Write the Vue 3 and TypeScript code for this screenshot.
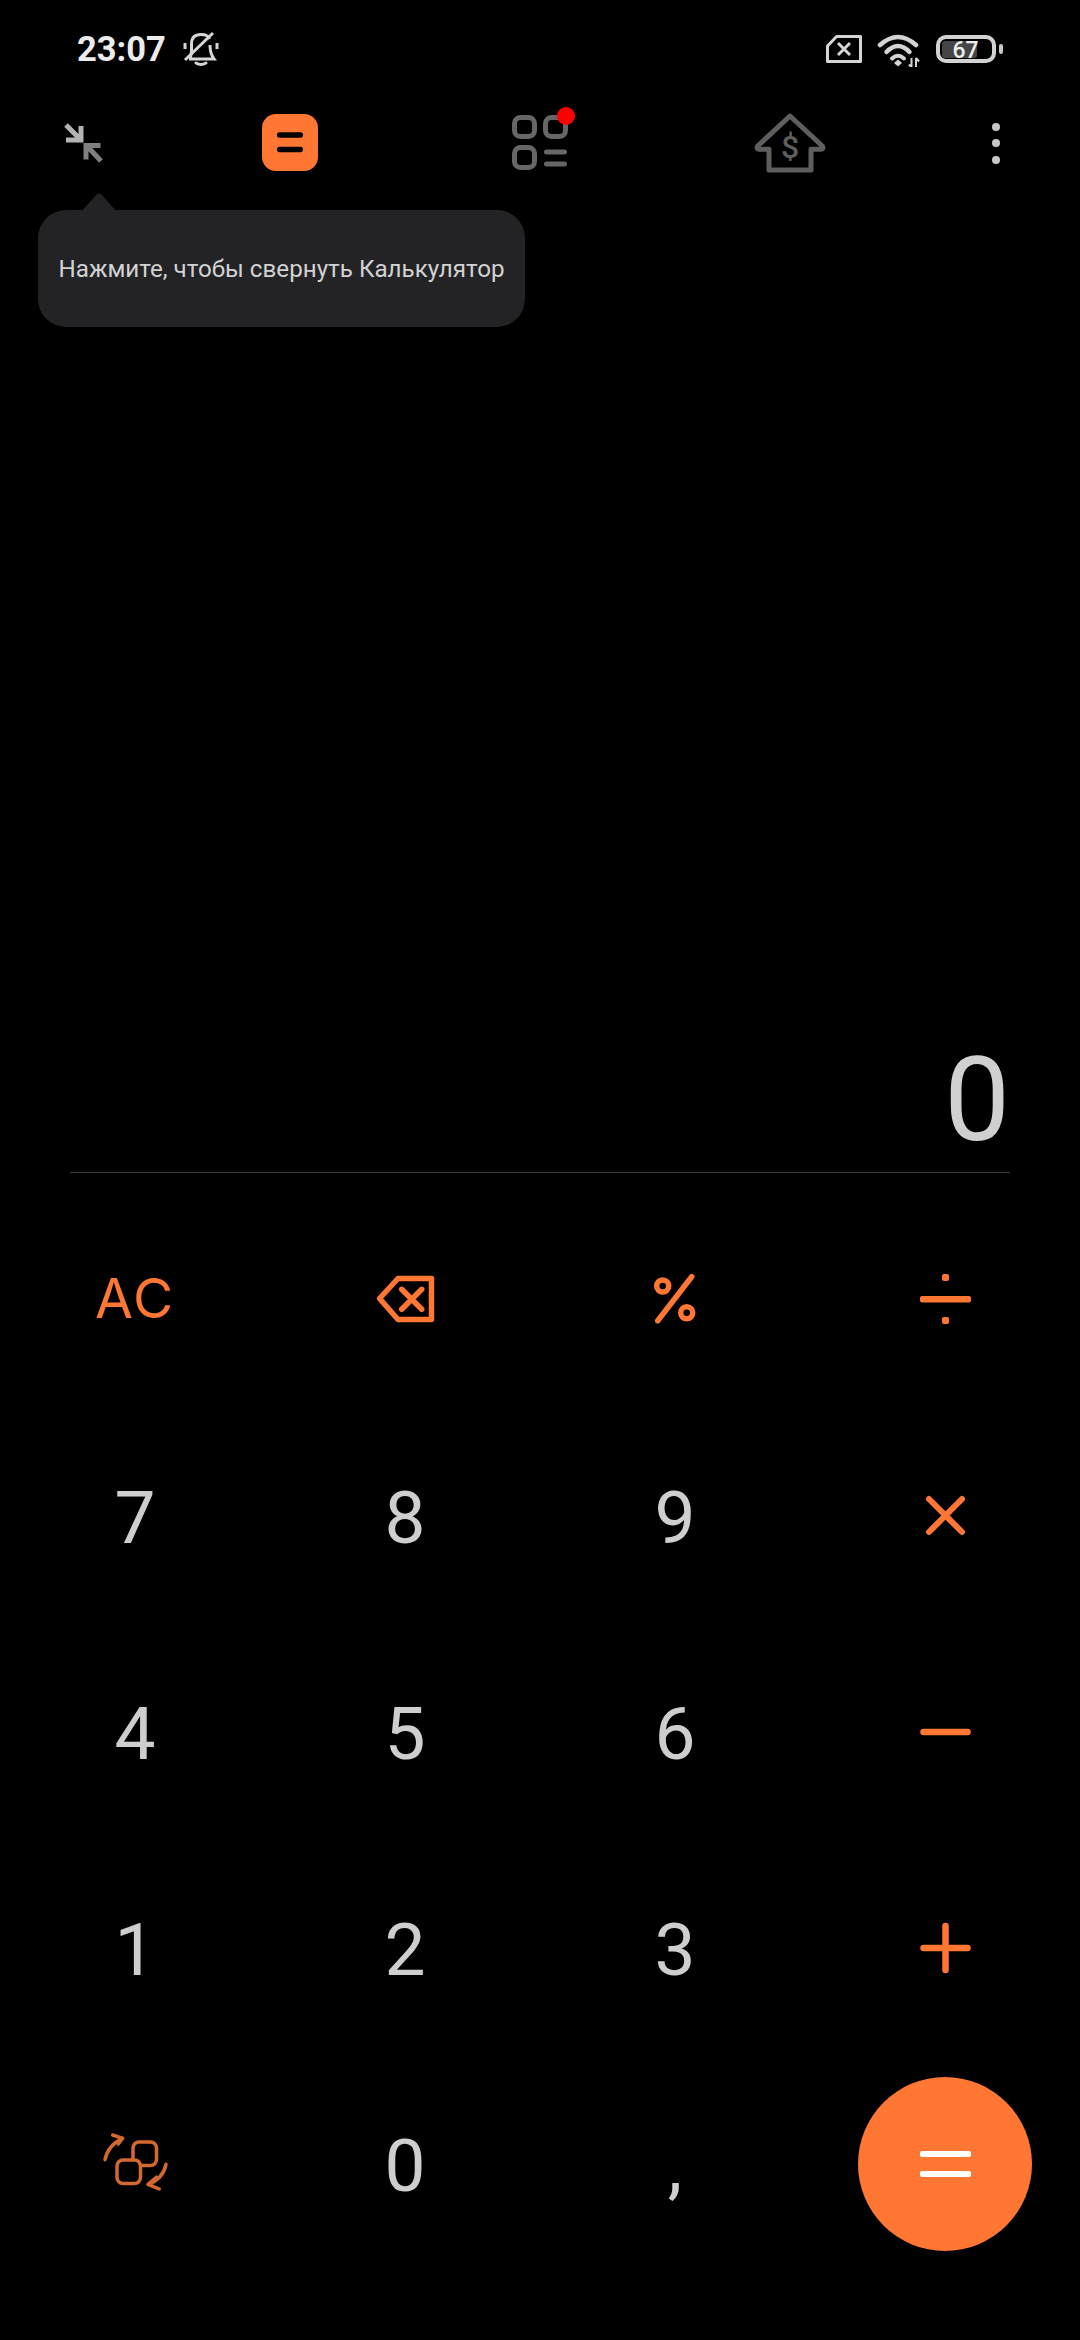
<script setup lang="ts">
type Key = { label?: string; icon?: string; kind: "num" | "fn" | "op" | "eq" };

const keys: Key[] = [
  { label: "AC", kind: "fn" },
  { icon: "back", kind: "fn" },
  { icon: "percent", kind: "fn" },
  { icon: "divide", kind: "fn" },
  { label: "7", kind: "num" },
  { label: "8", kind: "num" },
  { label: "9", kind: "num" },
  { icon: "times", kind: "op" },
  { label: "4", kind: "num" },
  { label: "5", kind: "num" },
  { label: "6", kind: "num" },
  { icon: "minus", kind: "op" },
  { label: "1", kind: "num" },
  { label: "2", kind: "num" },
  { label: "3", kind: "num" },
  { icon: "plus", kind: "op" },
  { icon: "swap", kind: "fn" },
  { label: "0", kind: "num" },
  { label: ",", kind: "num" },
  { kind: "eq" },
];
</script>

<template>
  <div class="page">
    <header class="status">
      <div class="status-left">
        <span class="time">23:07</span>
        <svg class="bell" width="60" height="50" viewBox="0 -1 60 50" fill="none" stroke="#d6d6d6">
          <path d="M19 33C21 29 20.5 24 20.5 19C20.5 12 24 9.5 30 9.5C35 9.5 37.5 11 38.5 14M39 20C39 26 40 30 43 34H18" stroke-width="3" />
          <path d="M25 38Q30 41 35 38" stroke-width="3" stroke-linecap="round" />
          <path d="M14 18V24M46 18V24" stroke-width="3" />
          <path d="M14 35L42 8" stroke-width="3" />
        </svg>
      </div>
      <div class="status-right">
        <svg width="40" height="36" viewBox="0 -1 40 36" fill="none" stroke="#d4d4d4" stroke-linejoin="round">
          <path d="M12.5 4.5H36.5V29.5H3.5V14Z" stroke-width="3" />
          <path d="M14 11L26 23M26 11L14 23" stroke-width="3" />
        </svg>
        <svg class="wifi" width="46" height="36" viewBox="0 -1 46 36" fill="none" stroke="#d4d4d4">
          <path d="M5 13Q23 -3 41 13" stroke-width="4.5" stroke-linecap="round" />
          <path d="M11.5 20Q23 8 34.5 20" stroke-width="4.5" stroke-linecap="round" />
          <path d="M17 26.5Q23 21 29 26.5" stroke-width="4" stroke-linecap="round" />
          <path d="M23 27.5L27 31L23 34.5L19 31Z" fill="#d4d4d4" stroke="none" />
          <path d="M36.5 26V35M34 32.5L36.5 35.5M41 35V26M41 26L44 29.5" stroke-width="2" />
        </svg>
        <svg class="battery" width="72" height="36" viewBox="0 -1 72 36">
          <rect x="4" y="5" width="56" height="24" rx="8" fill="none" stroke="#d2d2d2" stroke-width="4" />
          <rect x="8" y="9" width="35" height="17" rx="3" fill="#454545" />
          <rect x="65" y="12" width="4" height="10" rx="2" fill="#c8c8c8" />
          <text x="31.5" y="26" text-anchor="middle" class="battery-text">67</text>
        </svg>
      </div>
    </header>

    <nav class="toolbar">
      <svg width="60" height="60" viewBox="0 0 60 60" fill="none" stroke-width="5">
        <path d="M13 12L27 26M28 13V27H13" stroke="#b4b4b4" />
        <path d="M48 48L34 33M47.5 32.5H33V46.5" stroke="#808080" />
      </svg>
      <div class="toolbar-center">
        <svg width="60" height="60" viewBox="0 0 60 60">
          <rect x="2" y="1" width="56" height="57" rx="14" fill="#ff7733" />
          <path d="M19.7 22H40.3M19.7 36.5H40.3" stroke="#000" stroke-width="5.5" stroke-linecap="round" />
        </svg>
        <div class="tool-grid">
          <svg width="60" height="60" viewBox="0 0 60 60" fill="none" stroke="#666" stroke-width="5" stroke-linecap="round">
            <rect x="4.5" y="4.5" width="20" height="19" rx="6" />
            <rect x="35.5" y="4.5" width="20" height="19" rx="6" />
            <rect x="4.5" y="34.5" width="20" height="20" rx="6" />
            <path d="M36.5 39H54.5M36.5 51H54.5" />
          </svg>
          <span class="badge"></span>
        </div>
        <svg class="house" width="60" height="60" viewBox="15 0 60 60" fill="none" stroke="#5e5e5e" stroke-width="5" stroke-linejoin="round">
          <path d="M45 3L12.7 33Q11 36 14 36.3H24V57H66V36.3H76Q79 36 77.3 33Z" />
          <text x="45" y="44.5" text-anchor="middle" class="dollar">$</text>
        </svg>
      </div>
      <div class="more">
        <span></span>
        <span></span>
        <span></span>
      </div>
    </nav>

    <div class="hint">
      <svg class="hint-arrow" width="40" height="20" viewBox="0 0 40 20">
        <path d="M2 20L17 3Q20 0 23 3L38 20Z" fill="#232325" />
      </svg>
      <span>Нажмите, чтобы свернуть Калькулятор</span>
    </div>

    <section class="display">0</section>
    <div class="divider"></div>

    <section class="keypad">
      <div v-for="(key, i) in keys" :key="i" class="key" :class="key.kind">
        <template v-if="key.label">{{ key.label }}</template>

        <svg v-else-if="key.icon === 'back'" width="60" height="60" viewBox="0 0 60 60" fill="none" stroke="#ff7733" stroke-width="5.5" stroke-linejoin="round" stroke-linecap="round">
          <path d="M4.5 30.5L23 10.5H56.5V51.5H23Z" />
          <path d="M26.7 21.3L46.7 41.3M46.7 21.3L26.7 41.3" />
        </svg>
        <svg v-else-if="key.icon === 'percent'" width="60" height="60" viewBox="0 0 60 60" fill="none" stroke="#ff7733" stroke-width="5.5" stroke-linecap="round">
          <circle cx="17.7" cy="18" r="6" />
          <circle cx="41.7" cy="44.7" r="6" />
          <path d="M46.7 8.7L12.7 52.7" />
        </svg>
        <svg v-else-if="key.icon === 'divide'" width="60" height="60" viewBox="0 0 60 60" fill="#ff7733">
          <rect x="5" y="28" width="51" height="6.5" rx="2" />
          <rect x="27" y="6" width="7" height="7" rx="2" />
          <rect x="27" y="49" width="7" height="7" rx="2" />
        </svg>
        <svg v-else-if="key.icon === 'times'" width="60" height="60" viewBox="0 0 60 60" fill="none" stroke="#ff7733" stroke-width="6" stroke-linecap="round">
          <path d="M14 13L47 46M47 13L14 46" />
        </svg>
        <svg v-else-if="key.icon === 'minus'" width="60" height="60" viewBox="0 0 60 60" fill="none" stroke="#ff7733" stroke-width="6.5" stroke-linecap="round">
          <path d="M8.5 30H52.5" />
        </svg>
        <svg v-else-if="key.icon === 'plus'" width="60" height="60" viewBox="0 0 60 60" fill="none" stroke="#ff7733" stroke-width="6.5" stroke-linecap="round">
          <path d="M8.5 30H52.5M30.5 8V52" />
        </svg>
        <svg v-else-if="key.icon === 'swap'" width="70" height="70" viewBox="0 0 70 70" fill="none" stroke="#d4692f" stroke-width="3.5" stroke-linecap="round" stroke-linejoin="round">
          <rect x="33" y="15" width="23.5" height="23.5" rx="6" />
          <rect x="17" y="33" width="23.5" height="23.5" rx="6" fill="#000" />
          <path d="M5 32.7Q8 18 22.7 11.3M12.7 8L22.7 11.3L18.3 17" />
          <path d="M66 37.3Q63 52 48 57.3M59.3 62L48 57.3L56.7 50" />
        </svg>

        <div v-else-if="key.kind === 'eq'" class="equals">
          <span></span>
          <span></span>
        </div>
      </div>
    </section>
  </div>
</template>

<style>
html,
body {
  margin: 0;
  background: #000;
}
</style>

<style scoped>
.page {
  position: relative;
  width: 1080px;
  height: 2340px;
  display: flex;
  flex-direction: column;
  background: #000;
  font-family: Roboto, "Noto Sans", sans-serif;
  overflow: hidden;
}

.status {
  height: 98px;
  display: flex;
  align-items: center;
  justify-content: space-between;
  padding: 0 74px 0 77px;
}

.status-left {
  display: flex;
  align-items: center;
}

.status-right {
  display: flex;
  align-items: center;
  gap: 11px;
}

.time {
  font-size: 34.5px;
  font-weight: 700;
  color: #ececec;
  line-height: 1;
}

.bell {
  margin-left: 5px;
}

.battery {
  margin-left: 2px;
}

.battery-text {
  font-size: 23px;
  font-weight: 500;
  fill: #ececec;
}

.toolbar {
  height: 90px;
  display: flex;
  align-items: center;
  justify-content: space-between;
  padding: 0 54px 0 53px;
}

.toolbar-center {
  display: flex;
  align-items: center;
  gap: 190px;
}

.house {
  overflow: visible;
}

.tool-grid {
  position: relative;
  width: 60px;
  height: 60px;
}

.badge {
  position: absolute;
  top: -6px;
  left: 47.5px;
  width: 18px;
  height: 18px;
  border-radius: 50%;
  background: #ff0000;
}

.dollar {
  font-size: 32px;
  font-weight: 500;
  fill: #5e5e5e;
  stroke: none;
}

.more {
  width: 60px;
  display: flex;
  flex-direction: column;
  align-items: center;
  gap: 8.5px;
}

.more span {
  width: 8px;
  height: 8px;
  border-radius: 50%;
  background: #c8c8c8;
}

.hint {
  position: absolute;
  top: 210px;
  left: 38px;
  width: 487px;
  height: 117px;
  display: flex;
  align-items: center;
  justify-content: center;
  border-radius: 28px;
  background: #232325;
  color: #d2d2d2;
  font-size: 24.2px;
}

.hint-arrow {
  position: absolute;
  top: -18px;
  left: 41px;
}

.display {
  flex: 1;
  display: flex;
  align-items: flex-end;
  justify-content: flex-end;
  padding-right: 70px;
  margin-bottom: 13px;
  font-size: 117px;
  line-height: 117px;
  color: #d0d0d0;
}

.divider {
  height: 1px;
  margin: 0 70px 21px;
  background: #3a3a3a;
}

.keypad {
  display: grid;
  grid-template-columns: repeat(4, 1fr);
  grid-auto-rows: 216px;
  margin-bottom: 66px;
}

.key {
  display: flex;
  align-items: center;
  justify-content: center;
  box-sizing: border-box;
  line-height: 1;
}

.num {
  font-size: 73px;
  color: #cecece;
}

.fn {
  padding-bottom: 8px;
  font-family: Inter, Roboto, sans-serif;
  font-size: 55px;
  letter-spacing: 2px;
  color: #ff7733;
}

.op {
  padding-bottom: 4px;
}

.eq {
  padding-bottom: 5px;
}

.equals {
  width: 174px;
  height: 174px;
  display: flex;
  flex-direction: column;
  align-items: center;
  justify-content: center;
  gap: 14px;
  border-radius: 50%;
  background: #ff7733;
}

.equals span {
  width: 51px;
  height: 6px;
  border-radius: 2px;
  background: #fff;
}
</style>
